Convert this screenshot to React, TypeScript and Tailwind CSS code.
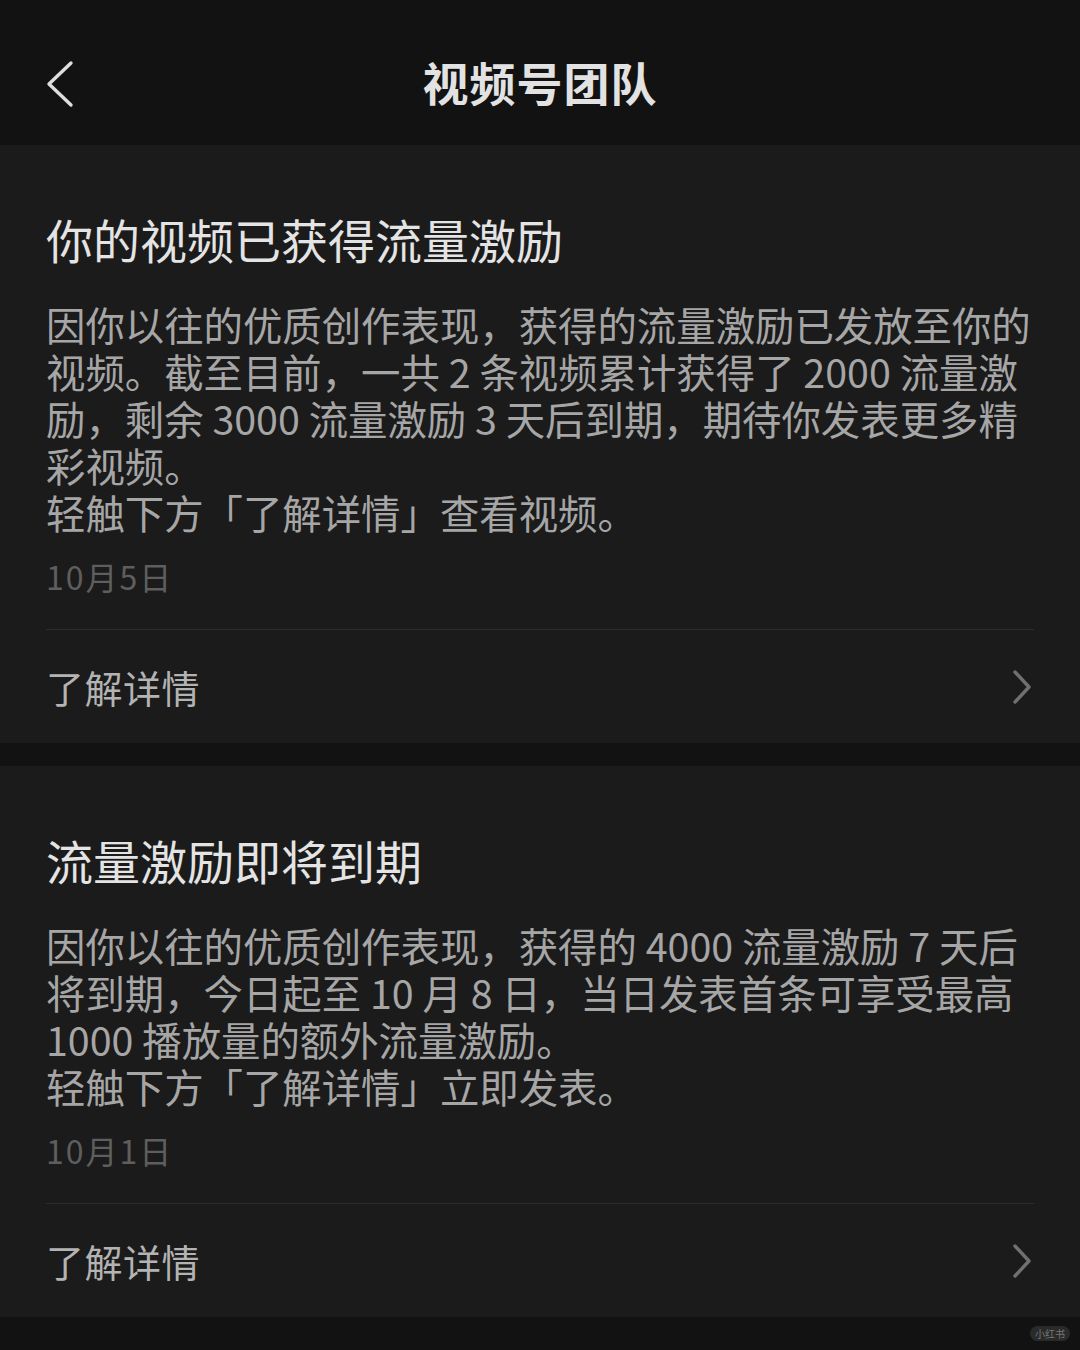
import React from "react";

const font = { fontFamily: '"Noto Sans CJK SC", "Noto Sans", sans-serif' };

function ChevronRight() {
  return (
    <svg width="20" height="34" viewBox="0 0 20 34" fill="none">
      <path d="M3 2 L17 17 L3 32" stroke="#707070" strokeWidth="3.4" strokeLinecap="round" strokeLinejoin="round" />
    </svg>
  );
}

function Card({ title, lines, date }: { title: string; lines: string[]; date: string }) {
  return (
    <div className="bg-[#1b1b1b] px-[46px]">
      <div className="pt-[66px] text-[47px] leading-[56px] text-[#e4e4e4] whitespace-nowrap">{title}</div>
      <div className="mt-[33px] text-[39.4px] leading-[47px] text-[#a6a6a6]">
        {lines.map((l, i) => (
          <div key={i} className="whitespace-nowrap">{l}</div>
        ))}
      </div>
      <div className="mt-[21px] text-[32px] leading-[40px] tracking-[2px] text-[#5e5e5e]">{date}</div>
      <div className="mt-[33px] h-px bg-[#2c2c2c]" />
      <div className="h-[113px] flex items-center justify-between">
        <span className="text-[38px] tracking-[0.5px] text-[#b3b3b3]">了解详情</span>
        <span className="mr-[2px]"><ChevronRight /></span>
      </div>
    </div>
  );
}

export default function App() {
  return (
    <div className="w-[1080px] h-[1350px] bg-[#121212] overflow-hidden relative" style={font}>
      <div className="h-[145px] flex items-center justify-center relative pt-[18px]">
        <svg className="absolute left-[44px] top-[60px]" width="32" height="48" viewBox="0 0 32 48" fill="none">
          <path d="M27 3 L5 24 L27 45" stroke="#dedede" strokeWidth="3.4" strokeLinecap="round" strokeLinejoin="round" />
        </svg>
        <span className="text-[46px] font-bold text-[#e2e2e2] tracking-[1px]">视频号团队</span>
      </div>
      <Card
        title="你的视频已获得流量激励"
        lines={[
          "因你以往的优质创作表现，获得的流量激励已发放至你的",
          "视频。截至目前，一共 2 条视频累计获得了 2000 流量激",
          "励，剩余 3000 流量激励 3 天后到期，期待你发表更多精",
          "彩视频。",
          "轻触下方「了解详情」查看视频。",
        ]}
        date="10月5日"
      />
      <div className="h-[23px]" />
      <Card
        title="流量激励即将到期"
        lines={[
          "因你以往的优质创作表现，获得的 4000 流量激励 7 天后",
          "将到期，今日起至 10 月 8 日，当日发表首条可享受最高",
          "1000 播放量的额外流量激励。",
          "轻触下方「了解详情」立即发表。",
        ]}
        date="10月1日"
      />
      <div className="absolute right-[10px] bottom-[9px] rounded-full bg-[#2a2a2a] px-[5px] py-[1px] text-[10px] leading-[13px] text-[#777]">小红书</div>
    </div>
  );
}
